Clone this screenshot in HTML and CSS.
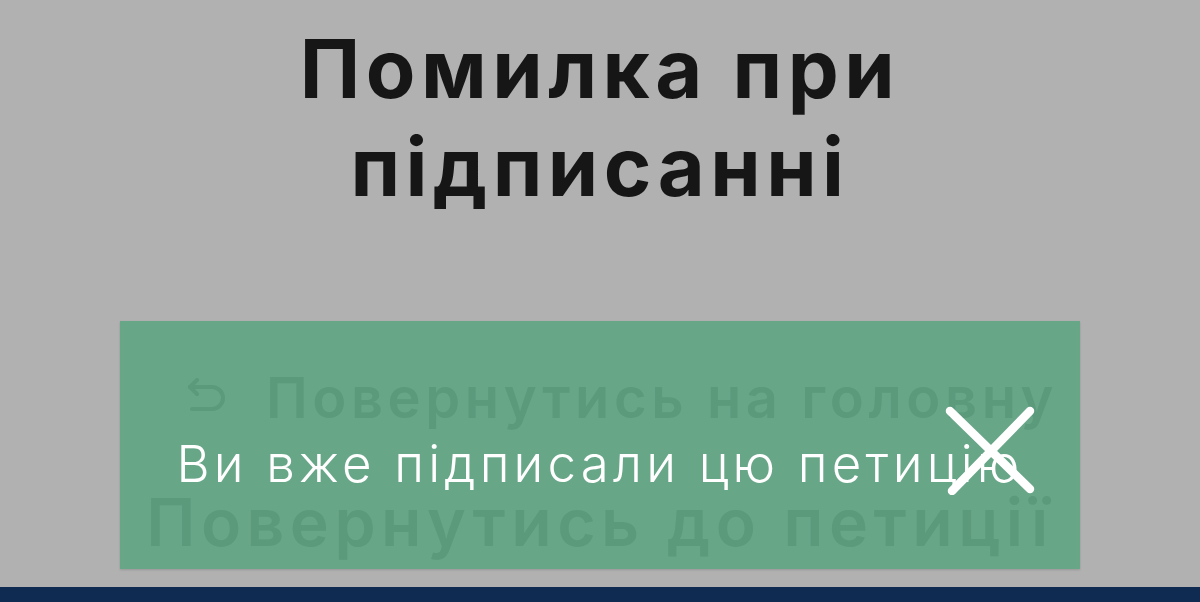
FILE: index.html
```html
<!DOCTYPE html>
<html lang="uk">
<head>
<meta charset="utf-8">
<title>Помилка при підписанні</title>
<link rel="stylesheet" href="styles.css">
</head>
<body>
<div class="page">
  <main class="content">
    <h1 class="title">Помилка при<br>підписанні</h1>
    <section class="panel">
      <div class="actions">
        <a class="btn btn-home" href="#">
          <svg class="back-icon" viewBox="0 0 50 40" width="50" height="40" aria-hidden="true">
            <path d="M8 9 H30 A11 11 0 0 1 30 31 H10" fill="none" stroke="currentColor" stroke-width="4" stroke-linecap="round"/>
            <path d="M15 2 L8 9 L15 16" fill="none" stroke="currentColor" stroke-width="4" stroke-linecap="round" stroke-linejoin="round"/>
          </svg>
          <span>Повернутись на головну</span>
        </a>
        <a class="btn btn-petition" href="#">Повернутись до петиції</a>
      </div>
      <div class="toast">
        <p class="toast-text">Ви вже підписали цю петицію</p>
        <svg class="toast-close" viewBox="0 0 100 100" width="100" height="100" aria-hidden="true">
          <path d="M14 16 L94 94 M94 16 L16 96" stroke="#ffffff" stroke-width="8.5" stroke-linecap="round" fill="none"/>
        </svg>
      </div>
    </section>
  </main>
  <footer class="footer"></footer>
</div>
</body>
</html>
```

FILE: styles.css
```css
* { box-sizing: border-box; }
html, body { margin: 0; padding: 0; }
body {
  font-family: Inter, "Noto Sans", sans-serif;
  background: #b1b1b1;
}
.page {
  height: 602px;
  display: flex;
  flex-direction: column;
  overflow: hidden;
}
.content {
  flex: 1;
  display: flex;
  flex-direction: column;
  align-items: center;
  padding-top: 20px;
}
.title {
  margin: 0;
  font-size: 81px;
  line-height: 98px;
  font-weight: 700;
  color: #161616;
  text-align: center;
  letter-spacing: 5.5px;
}
.panel {
  position: relative;
  margin-top: 105px;
  width: 960px;
  height: 248px;
  background: #68a688;
  box-shadow: 0 1px 2px rgba(0,0,0,0.15);
}
.actions {
  display: flex;
  flex-direction: column;
  align-items: center;
  padding-top: 42px;
}
.btn {
  display: flex;
  align-items: center;
  color: #5c9a7c;
  text-decoration: none;
  font-weight: 600;
}
.btn-home {
  font-size: 56px;
  line-height: 70px;
  gap: 34px;
  padding-left: 40px;
  letter-spacing: 4.6px;
}
.back-icon { flex: none; }
.btn-petition {
  margin-top: 44px;
  font-size: 66px;
  line-height: 90px;
  letter-spacing: 5.5px;
}
.toast {
  position: absolute;
  inset: 0;
}
.toast-text {
  margin: 0;
  position: absolute;
  left: 0;
  right: 0;
  top: 112px;
  text-align: center;
  color: #ffffff;
  font-size: 51px;
  line-height: 62px;
  font-weight: 300;
  letter-spacing: 4.2px;
}
.toast-close {
  position: absolute;
  left: 816px;
  top: 74px;
}
.footer {
  height: 15px;
  background: #0f2b52;
  flex: none;
}
```
